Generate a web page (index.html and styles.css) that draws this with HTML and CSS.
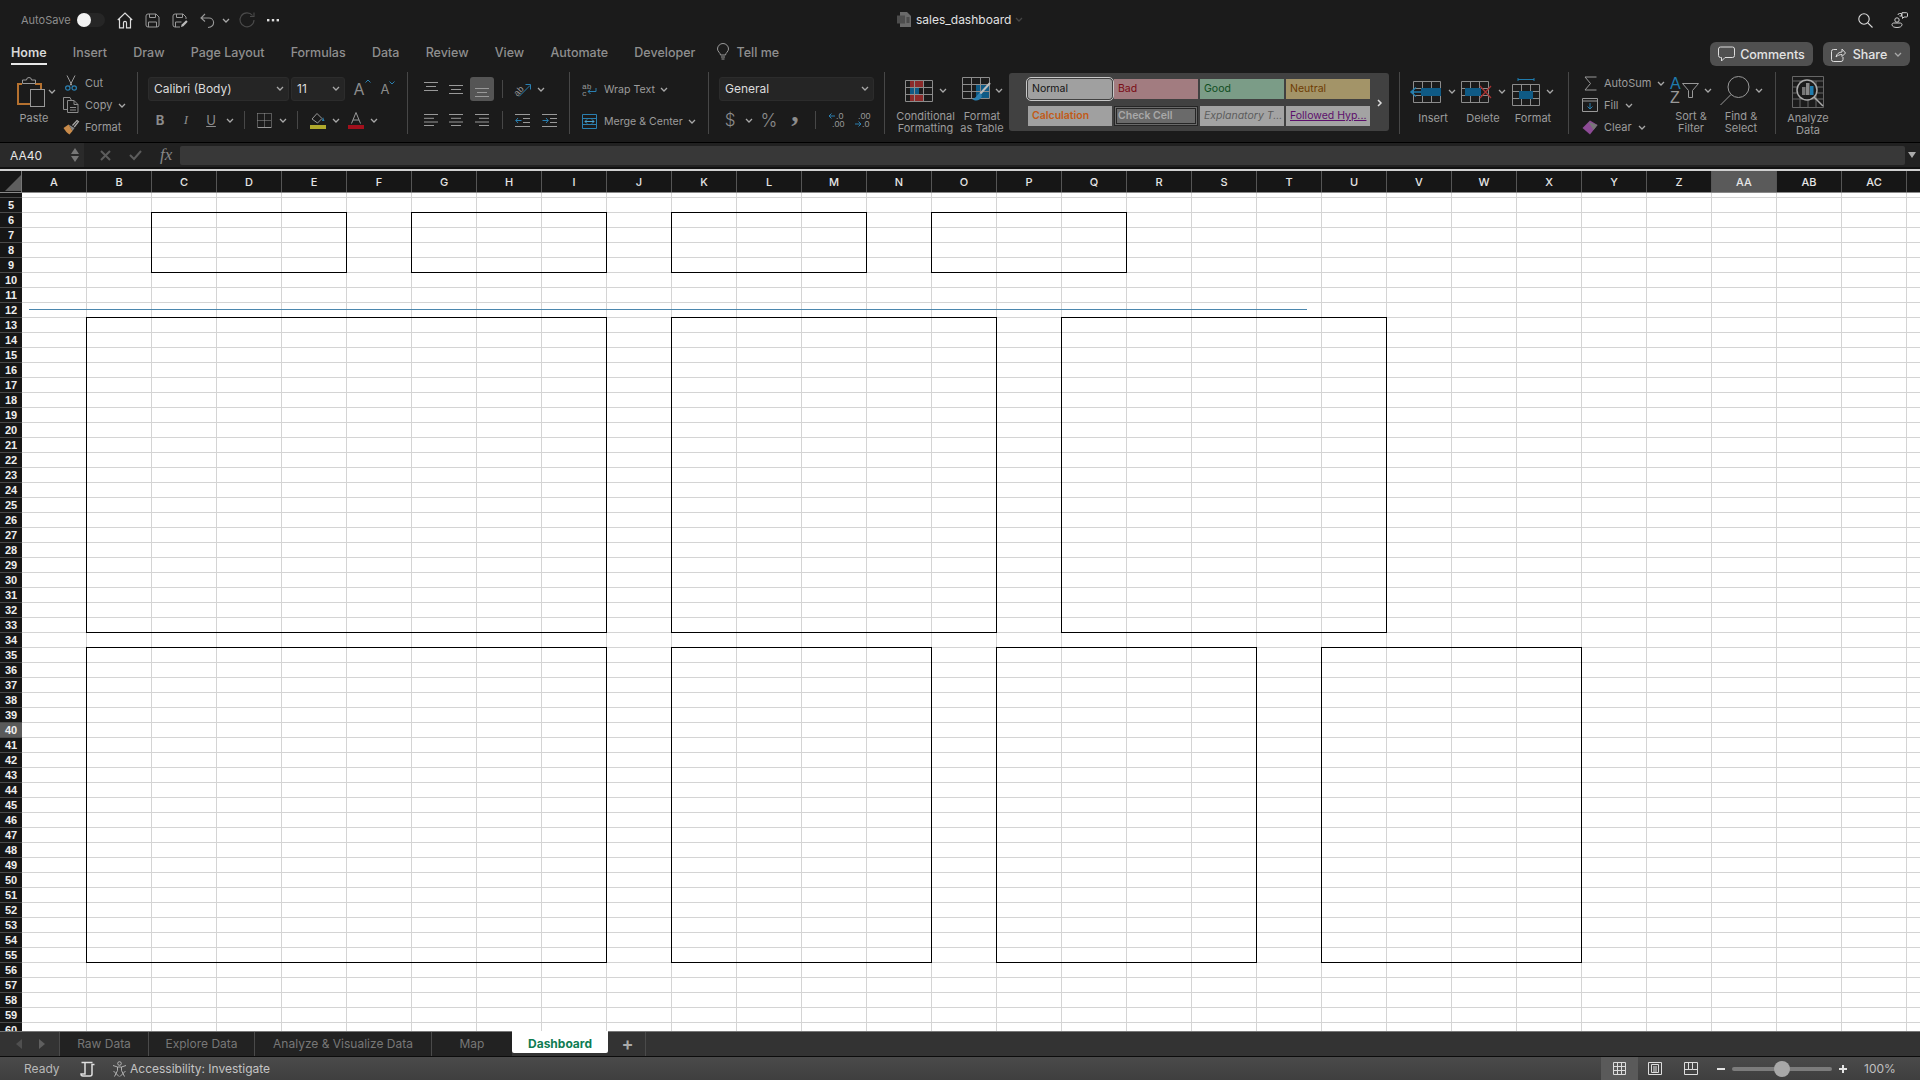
FILE: index.html
```html
<!DOCTYPE html>
<html lang="en">
<head>
    <meta charset="UTF-8">
    <title>sales_dashboard</title>
    <link rel="stylesheet" href="styles.css">
</head>
<body>
    <svg class="sprite" width="0" height="0">
        <symbol id="chev" viewBox="0 0 8 5"><path d="M1 1l3 3 3-3" fill="none" stroke="currentColor" stroke-width="1.3"/></symbol>
        <symbol id="cells3" viewBox="0 0 28 22"><path d="M.5 .5h27v21H.5zM.5 7.5h27M.5 14.5h27M9.5 .5v21M18.5 .5v21" fill="none" stroke="#8c8c8c"/></symbol>
    </svg>

    <!-- title bar -->
    <div class="titlebar">
        <div class="qat">
            <span class="autosave">AutoSave</span>
            <span class="toggle"><span class="knob"></span></span>
            <svg class="q-home" width="16" height="17" viewBox="0 0 16 17" fill="none" stroke="#ddd" stroke-width="1.2"><path d="M.8 8 8 1l7.2 7M2.5 6.8v9h4v-5a1.5 1.5 0 0 1 3 0v5h4v-9"/></svg>
            <svg class="q-save" width="15" height="15" viewBox="0 0 15 15" fill="none" stroke="#999"><path d="M1 3a2 2 0 0 1 2-2h8l3 3v8a2 2 0 0 1-2 2H3a2 2 0 0 1-2-2zM4.5 1v3.5h6V1M3.5 14V9h8v5"/></svg>
            <svg class="q-saveas" width="16" height="15" viewBox="0 0 16 15" fill="none" stroke="#999"><path d="M8 14H3a2 2 0 0 1-2-2V3a2 2 0 0 1 2-2h8l3 3v2M4.5 1v3.5h6V1M3.5 14V9h6"/><path d="M9 14l.7-2.6 4.5-4.2 1.5 1.6-4.3 4.4z" fill="#bbb" stroke="none"/></svg>
            <svg class="q-undo" width="15" height="15" viewBox="0 0 15 15" fill="none" stroke="#999" stroke-width="1.1"><path d="M5 1 1 5l4 3.5M1.2 5H9a4.6 4.6 0 0 1 4.6 4.5c0 2.4-2 4.5-5.6 5"/></svg>
            <svg class="chev q-chev" width="8" height="5"><use href="#chev"/></svg>
            <svg class="q-redo" width="16" height="16" viewBox="0 0 16 16" fill="none" stroke="#4a4a4a" stroke-width="1.1"><path d="M13.5 3.5A7 7 0 1 0 15 8M15 .5v4h-4"/></svg>
            <svg class="q-dots" width="12" height="3" viewBox="0 0 12 3" fill="#ddd"><rect width="2.4" height="2.4"/><rect x="4.8" width="2.4" height="2.4"/><rect x="9.6" width="2.4" height="2.4"/></svg>
        </div>
        <div class="doc-title">
            <svg width="15" height="15" viewBox="0 0 15 15"><path d="M3 0h7l4 4v11H3z" fill="#6a6a6a"/><path d="M0 3.5h8v8H0z" fill="#4d4d4d"/><path d="M9.5 6h3M9.5 8h3M9.5 10h3" stroke="#2a2a2a"/></svg>
            <span>sales_dashboard</span>
            <svg class="chev dim" width="8" height="5"><use href="#chev"/></svg>
        </div>
        <div class="title-right">
            <svg width="15" height="15" viewBox="0 0 15 15" fill="none" stroke="#ddd" stroke-width="1.1"><circle cx="6" cy="6" r="5.2"/><path d="M9.8 9.8 14.5 14.5"/></svg>
            <svg width="17" height="16" viewBox="0 0 17 16" fill="none" stroke="#ccc"><circle cx="6" cy="8" r="2.2"/><path d="M1 12.5c0-1 1-1.5 2-1.5h6c1 0 2 .5 2 1.500 0 2-2 3-5 3s-5-1-5-3zM7 3a1.5 1.5 0 0 1 1.5-1.5h2V4H8.5M11 .7h4.500a1 1 0 0 1 1 1V4a1 1 0 0 1-1 1H13l-1.500 1.500V5H11z"/></svg>
        </div>
    </div>

    <!-- ribbon tabs -->
    <div class="tabs">
        <span class="tab active">Home</span>
        <span class="tab">Insert</span>
        <span class="tab">Draw</span>
        <span class="tab">Page Layout</span>
        <span class="tab">Formulas</span>
        <span class="tab">Data</span>
        <span class="tab">Review</span>
        <span class="tab">View</span>
        <span class="tab">Automate</span>
        <span class="tab">Developer</span>
        <span class="tab tell">
            <svg width="12" height="16" viewBox="0 0 12 16" fill="none" stroke="#999"><path d="M3.5 11c0-2-3-3.5-3-6a5.5 5.5 0 0 1 11 0c0 2.5-3 4-3 6zM4 13h4M4.5 15h3"/></svg>
            Tell me
        </span>
        <div class="tab-actions">
            <button class="pill pill-comments">
                <svg width="17" height="16" viewBox="0 0 17 16" fill="none" stroke="#ddd"><path d="M2.5 1h12a2 2 0 0 1 2 2v6.5a2 2 0 0 1-2 2H7l-3.500 3.500v-3.500h-1a2 2 0 0 1-2-2V3a2 2 0 0 1 2-2z"/></svg>
                Comments
            </button>
            <button class="pill pill-share">
                <svg width="15" height="15" viewBox="0 0 15 15" fill="none" stroke="#ddd"><path d="M6 2.5H2.5a2 2 0 0 0-2 2v8a2 2 0 0 0 2 2H10a2 2 0 0 0 2-2V10M5 10c.5-3 3-5 6-5V2l3.500 4L11 9.500V7.500c-2.500 0-4.500 1-6 2.500z"/></svg>
                Share
                <svg class="chev" width="8" height="5"><use href="#chev"/></svg>
            </button>
        </div>
    </div>

    <!-- ribbon -->
    <div class="ribbon">
        <div class="group g-clip">
            <div class="big paste">
                <div class="big-ic">
                    <svg width="28" height="30" viewBox="0 0 28 30" fill="none"><path d="M5 7H1v20h12M18 7h6v5" stroke="#b5712f" stroke-width="2"/><path d="M5.5 6.5V3h4a2.500 2.500 0 0 1 5 0h4v3.500z" stroke="#999"/><rect x="13.5" y="12.5" width="14" height="17" fill="#1b1b1b" stroke="#999"/></svg>
                    <svg class="chev" width="8" height="5"><use href="#chev"/></svg>
                </div>
                <span class="big-label">Paste</span>
            </div>
            <div class="mini-list">
                <div class="mini"><span class="mini-ic"><svg width="12" height="16" viewBox="0 0 12 16" fill="none"><path d="M2 .5l5 10M10 .5l-5 10" stroke="#999"/><circle cx="2.8" cy="13" r="2.2" stroke="#2a7fb0" stroke-width="1.2"/><circle cx="9.2" cy="13" r="2.2" stroke="#2a7fb0" stroke-width="1.2"/></svg></span><span>Cut</span></div>
                <div class="mini"><span class="mini-ic"><svg width="16" height="16" viewBox="0 0 16 16" fill="none" stroke="#8c8c8c"><path d="M4.5 12.5H.5V.5H7l1.500 3M4.500 3.500H11l4 4v8H4.500zM11 3.500v4h4M7 10.500h6M7 13h6"/></svg></span><span>Copy</span><svg class="chev" width="8" height="5"><use href="#chev"/></svg></div>
                <div class="mini"><span class="mini-ic"><svg width="16" height="15" viewBox="0 0 16 15" fill="none"><path d="M9.5 5.5l4.500-5 1.500 1.200-4.300 5.300" stroke="#aaa" stroke-width="1.2"/><path d="M5.5 4.5l6 3.500-2 3z" fill="#888"/><path d="M.5 8l5-3.500 4 6.500-3 3.500C4 13 2 10.500 .5 8z" fill="#c98b4a"/></svg></span><span>Format</span></div>
            </div>
        </div>

        <div class="group g-font">
            <div class="row">
                <div class="select font-name"><span>Calibri (Body)</span><svg class="chev" width="8" height="5"><use href="#chev"/></svg></div>
                <div class="select font-size"><span>11</span><svg class="chev" width="8" height="5"><use href="#chev"/></svg></div>
                <span class="grow">A<svg width="6" height="4" viewBox="0 0 6 4" fill="none" stroke="#2a7fb0"><path d="M.5 3.500 3 1l2.500 2.500"/></svg></span>
                <span class="shrink">A<svg width="6" height="4" viewBox="0 0 6 4" fill="none" stroke="#2a7fb0"><path d="M.5 .5 3 3 5.500 .5"/></svg></span>
            </div>
            <div class="row-grid font-row2">
                <b class="fmt">B</b>
                <i class="fmt fmt-i">I</i>
                <u class="fmt">U</u>
                <svg class="chev" width="8" height="5"><use href="#chev"/></svg>
                <span class="vsep"></span>
                <svg width="15" height="15" viewBox="0 0 15 15" fill="none" stroke="#999"><path d="M.5 14.500h14"/><path d="M.5 .5h14M.5 .5v14M14.500 .5v14M7.500 .5v14M.5 7.500h14" stroke-dasharray="1 1"/></svg>
                <svg class="chev" width="8" height="5"><use href="#chev"/></svg>
                <span class="vsep"></span>
                <svg width="16" height="17" viewBox="0 0 16 17" fill="none"><path d="M2 7l5-5.500 5 5-4.500 4.500z" stroke="#999"/><path d="M13 5l1.500 4-2.500 0z" fill="#2a7fb0"/><rect y="13" width="16" height="4" fill="#b0a92c"/></svg>
                <svg class="chev" width="8" height="5"><use href="#chev"/></svg>
                <svg width="16" height="17" viewBox="0 0 16 17" fill="none"><path d="M3.500 11.500 8 .5l4.500 11M5 8h6" stroke="#999"/><rect y="13" width="16" height="4" fill="#a3101c"/></svg>
                <svg class="chev" width="8" height="5"><use href="#chev"/></svg>
            </div>
        </div>

        <div class="group g-align">
            <div class="row-grid align-row1">
                <svg class="a-top" width="14" height="9" viewBox="0 0 14 9" stroke="#999"><path d="M0 .5h14M2 4.500h10M0 8.500h14"/></svg>
                <svg width="14" height="9" viewBox="0 0 14 9" stroke="#999"><path d="M0 .5h14M2 4.500h10M0 8.500h14"/></svg>
                <span class="on"><svg class="a-bot" width="14" height="9" viewBox="0 0 14 9" stroke="#999"><path d="M0 .5h14M2 4.500h10M0 8.500h14"/></svg></span>
                <span class="vsep"></span>
                <svg width="17" height="15" viewBox="0 0 17 15" fill="none"><text transform="rotate(-45 6 9)" x="0" y="11" class="ic-ab">ab</text><path d="M5 14.500 16 3.500M11.500 2.500h5v5" stroke="#2a7fb0"/></svg>
                <svg class="chev" width="8" height="5"><use href="#chev"/></svg>
            </div>
            <div class="row-grid align-row2">
                <svg width="14" height="12" viewBox="0 0 14 12" stroke="#999"><path d="M0 .5h14M0 4.300h10M0 8h14M0 11.500h10"/></svg>
                <svg width="14" height="12" viewBox="0 0 14 12" stroke="#999"><path d="M0 .5h14M2 4.300h10M0 8h14M2 11.500h10"/></svg>
                <svg width="14" height="12" viewBox="0 0 14 12" stroke="#999"><path d="M0 .5h14M4 4.300h10M0 8h14M4 11.500h10"/></svg>
                <span class="vsep"></span>
                <svg width="15" height="13" viewBox="0 0 15 13" fill="none"><path d="M0 .5h15M0 12.500h15M8 4.500h7M8 8.500h7" stroke="#999"/><path d="M6.500 6.500H.8M3 4 .8 6.500 3 9" stroke="#2a7fb0"/></svg>
                <svg width="15" height="13" viewBox="0 0 15 13" fill="none"><path d="M0 .5h15M0 12.500h15M8 4.500h7M8 8.500h7" stroke="#999"/><path d="M.5 6.500h5.700M4 4l2.200 2.500L4 9" stroke="#2a7fb0"/></svg>
            </div>
        </div>

        <div class="group g-wrap">
            <div class="mini mini-tall">
                <span class="wrap-ic"><svg width="15" height="15" viewBox="0 0 15 15" fill="none"><text x="0" y="6.500" class="ic-txt">ab</text><text x="0" y="14" class="ic-txt">c</text><path d="M14 6v3.500H6M8.500 7.500 6 9.500 8.500 12" stroke="#2a7fb0"/></svg></span>
                <span>Wrap Text</span><svg class="chev" width="8" height="5"><use href="#chev"/></svg>
            </div>
            <div class="mini mini-tall">
                <span class="wrap-ic"><svg width="15" height="15" viewBox="0 0 15 15" fill="none" stroke="#2a7fb0"><path d="M.5 .5h14v14H.5zM.5 4.500h14M.5 10.500h14"/><path d="M3 7.500h9M5 5.500l-2 2 2 2M10 5.500l2 2-2 2" stroke="#4aa3d0"/></svg></span>
                <span>Merge &amp; Center</span><svg class="chev" width="8" height="5"><use href="#chev"/></svg>
            </div>
        </div>

        <div class="group g-num">
            <div class="row"><div class="select num-format"><span>General</span><svg class="chev" width="8" height="5"><use href="#chev"/></svg></div></div>
            <div class="row-grid num-row2">
                <span class="sym">$</span>
                <svg class="chev" width="8" height="5"><use href="#chev"/></svg>
                <span class="sym sym-pct">%</span>
                <span class="sym sym-comma">,</span>
                <span class="vsep"></span>
                <svg width="16" height="16" viewBox="0 0 16 16" fill="none"><path d="M7 4H1M3.500 1.500 1 4l2.500 2.500" stroke="#2a7fb0"/><text x="8" y="7" class="ic-num">.0</text><text x="4" y="15" class="ic-num">.00</text></svg>
                <svg width="16" height="16" viewBox="0 0 16 16" fill="none"><text x="4" y="7" class="ic-num">.00</text><path d="M1 12h6M4.500 9.500 7 12l-2.500 2.500" stroke="#2a7fb0"/><text x="8" y="15" class="ic-num">.0</text></svg>
            </div>
        </div>

        <div class="group g-styles">
            <div class="big b-cond">
                <div class="big-ic">
                    <svg width="28" height="22" viewBox="0 0 28 22"><rect x="5" y="1" width="13" height="6" fill="#8c2a2a"/><rect x="5" y="8" width="9" height="6" fill="#0f5a85"/><rect x="5" y="15" width="14" height="6" fill="#8c2a2a"/><use href="#cells3" width="28" height="22"/></svg>
                    <svg class="chev" width="8" height="5"><use href="#chev"/></svg>
                </div>
                <span class="big-label">Conditional<br>Formatting</span>
            </div>
            <div class="big b-table">
                <div class="big-ic">
                    <svg width="30" height="27" viewBox="0 0 30 27"><rect x="14" y="8" width="13" height="13" fill="#0f5a85"/><use href="#cells3" width="28" height="22"/><path d="M28 6 18 17" stroke="#bbb" stroke-width="2"/><path d="M18 16c-3 1-3 5-8 6 2 2 8 3 10-3z" fill="#2a7fb0"/></svg>
                    <svg class="chev" width="8" height="5"><use href="#chev"/></svg>
                </div>
                <span class="big-label">Format<br>as Table</span>
            </div>
            <div class="gallery">
                <span class="st st-normal">Normal</span>
                <span class="st st-bad">Bad</span>
                <span class="st st-good">Good</span>
                <span class="st st-neutral">Neutral</span>
                <span class="st st-calc">Calculation</span>
                <span class="st st-check">Check Cell</span>
                <span class="st st-expl">Explanatory T...</span>
                <span class="st st-link">Followed Hyp...</span>
                <svg class="gallery-next" width="6" height="8" viewBox="0 0 6 8" fill="none" stroke="#ddd" stroke-width="1.5"><path d="M1 1l3 3-3 3"/></svg>
            </div>
        </div>

        <div class="group g-cells">
            <div class="big b-cell">
                <div class="big-ic">
                    <svg width="32" height="22" viewBox="0 0 32 22"><g transform="translate(3)"><use href="#cells3" width="28" height="22"/><rect x="8" y="7" width="20" height="8" fill="#0f5a85"/></g><path d="M11 11H1M6 6.500 1 11l5 4.500" fill="none" stroke="#1f7cae" stroke-width="1.5"/></svg>
                    <svg class="chev" width="8" height="5"><use href="#chev"/></svg>
                </div>
                <span class="big-label">Insert</span>
            </div>
            <div class="big b-cell">
                <div class="big-ic">
                    <svg width="31" height="22" viewBox="0 0 31 22"><use href="#cells3" width="28" height="22"/><rect x="4" y="7" width="16" height="8" fill="#0f5a85"/><path d="M19 5 30 17M30 5 19 17" stroke="#a83232" stroke-width="1.3"/></svg>
                    <svg class="chev" width="8" height="5"><use href="#chev"/></svg>
                </div>
                <span class="big-label">Delete</span>
            </div>
            <div class="big b-cell">
                <div class="big-ic">
                    <svg width="28" height="28" viewBox="0 0 28 28"><path d="M6 1.500h16M6 0v3M22 0v3" stroke="#1f7cae"/><g transform="translate(0 6)"><use href="#cells3" width="28" height="22"/><rect x="7" y="7" width="14" height="8" fill="#0f5a85"/></g></svg>
                    <svg class="chev" width="8" height="5"><use href="#chev"/></svg>
                </div>
                <span class="big-label">Format</span>
            </div>
        </div>

        <div class="group g-edit">
            <div class="mini-list edit-list">
                <div class="mini"><span class="mini-ic"><svg width="13" height="15" viewBox="0 0 13 15" fill="none" stroke="#999"><path d="M12.500 1H1l5.500 6.500L1 14h11.500"/></svg></span><span>AutoSum</span><svg class="chev" width="8" height="5"><use href="#chev"/></svg></div>
                <div class="mini"><span class="mini-ic"><svg width="16" height="14" viewBox="0 0 16 14" fill="none"><path d="M.5 .5h15v13H.5zM.5 3h15" stroke="#999"/><path d="M8 5v6M5.500 8.500 8 11l2.500-2.500" stroke="#2a7fb0"/></svg></span><span>Fill</span><svg class="chev" width="8" height="5"><use href="#chev"/></svg></div>
                <div class="mini"><span class="mini-ic"><svg width="16" height="16" viewBox="0 0 16 16"><path d="M.5 9 8 1.500 15.500 6 8 15.500z" fill="#8d4b96"/><path d="M6.500 3 15.500 6l-4 5z" fill="#777"/></svg></span><span>Clear</span><svg class="chev" width="8" height="5"><use href="#chev"/></svg></div>
            </div>
            <div class="big b-sort">
                <div class="big-ic">
                    <svg width="29" height="28" viewBox="0 0 29 28" fill="none"><text x="0" y="12" class="ic-az">A</text><text x="0" y="26" class="ic-az ic-z">Z</text><path d="M12.500 6.500h16l-6 7v7h-4v-7z" stroke="#999"/></svg>
                    <svg class="chev" width="8" height="5"><use href="#chev"/></svg>
                </div>
                <span class="big-label">Sort &amp;<br>Filter</span>
            </div>
            <div class="big b-sort">
                <div class="big-ic">
                    <svg width="30" height="30" viewBox="0 0 30 30" fill="none" stroke="#999"><circle cx="18.500" cy="11" r="10.500"/><path d="M11 18.500 .5 29"/></svg>
                    <svg class="chev" width="8" height="5"><use href="#chev"/></svg>
                </div>
                <span class="big-label">Find &amp;<br>Select</span>
            </div>
        </div>

        <div class="group g-analyze">
            <div class="big b-analyze">
                <div class="big-ic">
                    <svg width="32" height="32" viewBox="0 0 32 32" fill="none"><path d="M.5 .5h31v31H.5zM.5 5h31M.5 11h31M.5 17h31M.5 23h31M8 5v26M16 5v26M24 5v26" stroke="#666"/><circle cx="15" cy="14" r="10" fill="#1b1b1b" stroke="#aaa" stroke-width="1.5"/><rect x="10" y="11" width="3.500" height="8" fill="#777"/><rect x="14" y="7" width="3.500" height="12" fill="#888"/><rect x="18" y="10" width="3.500" height="9" fill="#1f7cae"/><path d="M22 21 31 30" stroke="#aaa" stroke-width="1.5"/></svg>
                </div>
                <span class="big-label">Analyze<br>Data</span>
            </div>
        </div>
    </div>

    <!-- formula bar -->
    <div class="formula-bar">
        <div class="name-box">
            <span>AA40</span>
            <span class="spin"><span class="tri-up"></span><span class="tri-down"></span></span>
        </div>
        <div class="fx-btns">
            <svg width="11" height="11" viewBox="0 0 11 11" stroke="#5c5c5c" stroke-width="2"><path d="M1 1l9 9M10 1l-9 9"/></svg>
            <svg width="13" height="11" viewBox="0 0 13 11" fill="none" stroke="#5c5c5c" stroke-width="2"><path d="M1 5l4 4 7-8"/></svg>
            <span class="fx">fx</span>
        </div>
        <div class="formula-input"></div>
        <span class="tri-down formula-drop"></span>
    </div>

    <!-- sheet -->
    <div class="col-heads">
        <span class="corner"><svg width="16" height="16" viewBox="0 0 16 16"><path d="M16 0v16H0z" fill="#5e5e5e"/></svg></span>
        <span class="ch">A</span><span class="ch">B</span><span class="ch">C</span><span class="ch">D</span><span class="ch">E</span>
        <span class="ch">F</span><span class="ch">G</span><span class="ch">H</span><span class="ch">I</span><span class="ch">J</span>
        <span class="ch">K</span><span class="ch">L</span><span class="ch">M</span><span class="ch">N</span><span class="ch">O</span>
        <span class="ch">P</span><span class="ch">Q</span><span class="ch">R</span><span class="ch">S</span><span class="ch">T</span>
        <span class="ch">U</span><span class="ch">V</span><span class="ch">W</span><span class="ch">X</span><span class="ch">Y</span>
        <span class="ch">Z</span><span class="ch ch-sel">AA</span><span class="ch">AB</span><span class="ch">AC</span><span class="ch"></span>
    </div>
    <div class="sheet">
        <div class="row-heads">
            <span class="rh rh-stub"></span>
            <span class="rh">5</span><span class="rh">6</span><span class="rh">7</span><span class="rh">8</span><span class="rh">9</span>
            <span class="rh">10</span><span class="rh">11</span><span class="rh">12</span><span class="rh">13</span><span class="rh">14</span>
            <span class="rh">15</span><span class="rh">16</span><span class="rh">17</span><span class="rh">18</span><span class="rh">19</span>
            <span class="rh">20</span><span class="rh">21</span><span class="rh">22</span><span class="rh">23</span><span class="rh">24</span>
            <span class="rh">25</span><span class="rh">26</span><span class="rh">27</span><span class="rh">28</span><span class="rh">29</span>
            <span class="rh">30</span><span class="rh">31</span><span class="rh">32</span><span class="rh">33</span><span class="rh">34</span>
            <span class="rh">35</span><span class="rh">36</span><span class="rh">37</span><span class="rh">38</span><span class="rh">39</span>
            <span class="rh rh-sel">40</span><span class="rh">41</span><span class="rh">42</span><span class="rh">43</span><span class="rh">44</span>
            <span class="rh">45</span><span class="rh">46</span><span class="rh">47</span><span class="rh">48</span><span class="rh">49</span>
            <span class="rh">50</span><span class="rh">51</span><span class="rh">52</span><span class="rh">53</span><span class="rh">54</span>
            <span class="rh">55</span><span class="rh">56</span><span class="rh">57</span><span class="rh">58</span><span class="rh">59</span>
            <span class="rh">60</span>
        </div>
        <div class="cells">
            <div class="shapes">
                <div class="box kpi k1"></div>
                <div class="box kpi k2"></div>
                <div class="box kpi k3"></div>
                <div class="box kpi k4"></div>
                <div class="box mid m1"></div>
                <div class="box mid m2"></div>
                <div class="box mid m3"></div>
                <div class="box low l1"></div>
                <div class="box low l2"></div>
                <div class="box low l3"></div>
                <div class="box low l4"></div>
            </div>
            <div class="rule"></div>
        </div>
    </div>

    <!-- sheet tabs -->
    <div class="sheet-tabs">
        <div class="tab-nav">
            <span class="tri-left"></span>
            <span class="tri-right"></span>
        </div>
        <span class="stab stab-raw">Raw Data</span>
        <span class="stab stab-explore">Explore Data</span>
        <span class="stab stab-analyze">Analyze &amp; Visualize Data</span>
        <span class="stab stab-map">Map</span>
        <span class="stab stab-on">Dashboard</span>
        <span class="stab-add">+</span>
    </div>

    <!-- status bar -->
    <div class="status">
        <span class="ready">Ready</span>
        <svg class="macro" width="15" height="16" viewBox="0 0 15 16" fill="none" stroke="#e0e0e0"><path d="M1.500 1.500h11M5 1.500V13H1c0 1 .7 2 2 2h7c1 0 2-1 2-2V3.500h2.500" stroke-width="1.5"/></svg>
        <svg class="a11y" width="15" height="16" viewBox="0 0 15 16" fill="none" stroke="#bbb" stroke-width=".9"><circle cx="7.500" cy="2.500" r="1.800"/><path d="M1 4.500 5.500 6h4L14 4.500M5.500 6v3.500L2.500 15.500M9.500 6v3.500l3 6M1.500 10l5.500 5.500M13.500 10 8 15.500"/></svg>
        <span class="a11y-text">Accessibility: Investigate</span>
        <div class="status-right">
            <span class="view view-on"><svg width="13" height="13" viewBox="0 0 13 13" fill="none" stroke="#ddd"><path d="M.5 .5h12v12H.5zM.5 4.500h12M.5 8.500h12M4.500 .5v12M8.500 .5v12"/></svg></span>
            <span class="view view-page"><svg width="14" height="13" viewBox="0 0 14 13" fill="none" stroke="#ddd"><path d="M.5 .5h13v12H.5zM3.500 2.500h7v8h-7zM5 5h4M5 7h4M5 9h4"/></svg></span>
            <span class="view view-break"><svg width="14" height="13" viewBox="0 0 14 13" fill="none" stroke="#ddd"><path d="M.5 .5h13v12H.5zM.5 7.500h8V.5M8.500 7.500h5M4.500 .5v7"/></svg></span>
            <span class="zoom-btn"></span>
            <div class="slider"><span class="slider-knob"></span></div>
            <span class="zoom-btn zoom-plus"></span>
            <span class="zoom-val">100%</span>
        </div>
    </div>
</body>
</html>
```

FILE: styles.css
```css
* {
    box-sizing: border-box;
}
html, body {
    margin: 0;
    height: 100%;
}
body {
    width: 1920px;
    height: 1080px;
    overflow: hidden;
    display: flex;
    flex-direction: column;
    background-color: #1b1b1b;
    color: #9c9c9c;
    font-family: Inter, "Liberation Sans", sans-serif;
    font-size: 11px;
}
.sprite {
    position: absolute;
}
svg {
    display: block;
    flex: none;
    overflow: visible;
}
.chev {
    color: #a8a8a8;
}
.chev.dim {
    color: #444;
}

/* title bar */
.titlebar {
    height: 40px;
    display: flex;
    align-items: center;
    position: relative;
    flex: none;
}
.qat {
    display: flex;
    align-items: center;
    padding-left: 21px;
}
.autosave {
    width: 56px;
    color: #8e8e8e;
}
.toggle {
    width: 28px;
    height: 14px;
    border-radius: 7px;
    background-color: #262626;
}
.knob {
    display: block;
    width: 14px;
    height: 14px;
    border-radius: 50%;
    background-color: #f2f2f2;
}
.q-home { margin-left: 12px; }
.q-save { margin-left: 12px; }
.q-saveas { margin-left: 12px; }
.q-undo { margin-left: 12px; }
.q-chev { margin-left: 7px; }
.q-redo { margin-left: 9px; }
.q-dots { margin-left: 12px; }
.doc-title {
    position: absolute;
    left: 897px;
    top: 12px;
    display: flex;
    align-items: center;
    gap: 4px;
    font-size: 12px;
    color: #e2e2e2;
}
.title-right {
    margin-left: auto;
    padding-right: 12px;
    display: flex;
    align-items: center;
    gap: 18px;
}

/* tabs */
.tabs {
    height: 30px;
    flex: none;
    display: flex;
    align-items: flex-start;
    gap: 26.2px;
    padding-left: 11px;
    font-size: 12.5px;
    font-weight: 500;
    color: #8f8f8f;
}
.tab {
    height: 25px;
    padding-top: 4px;
    line-height: 17px;
}
.tab.active {
    color: #d8d8d8;
    font-weight: 600;
    border-bottom: 2px solid #e8e8e8;
}
.tell {
    display: flex;
    gap: 8px;
    margin-left: -5px;
}
.tab-actions {
    margin-left: auto;
    padding: 2px 10px 0 0;
    display: flex;
    gap: 10px;
}
.pill {
    height: 24px;
    padding: 0;
    border: none;
    border-radius: 6px;
    background-color: #505050;
    color: #e4e4e4;
    font: 500 12.5px Inter, "Liberation Sans", sans-serif;
    display: flex;
    align-items: center;
    justify-content: center;
    gap: 5px;
}
.pill-comments { width: 103px; }
.pill-share { width: 87px; gap: 7px; }

/* ribbon */
.ribbon {
    height: 72px;
    flex: none;
    display: flex;
    align-items: flex-start;
}
.group {
    height: 62px;
    margin-top: 2px;
    border-right: 1px solid #474747;
    flex: none;
}
.g-clip { width: 138px; display: flex; }
.g-font { width: 270px; padding: 5px 0 0 10px; }
.g-align { width: 162px; padding: 5px 0 0 10px; }
.g-wrap { width: 139px; padding: 5px 0 0 10px; }
.g-num { width: 176px; padding: 5px 0 0 10px; }
.g-styles { width: 515px; padding-left: 11px; display: flex; }
.g-cells { width: 169px; padding-left: 8px; display: flex; }
.g-edit { width: 207px; padding-left: 13px; display: flex; }
.g-analyze { border-right: none; padding-left: 6px; }

.row {
    height: 24px;
    display: flex;
    align-items: center;
    gap: 2px;
}
.row-grid {
    height: 24px;
    margin-top: 7px;
    display: grid;
    align-items: center;
    justify-items: center;
}
.font-row2 { grid-template-columns: 24px 28px 22px 16px 12px 28px 10px 18px 24px 12px 28px 8px; }
.align-row1 { grid-template-columns: 25px 26px 26px 14px 26px 12px; margin-top: 0; }
.align-row2 { grid-template-columns: 25px 26px 26px 14px 27px 26px; }
.num-row2 { grid-template-columns: 22px 16px 24px 28px 12px 30px 22px; }
.a-top { margin-bottom: 6px; }
.a-bot { margin-top: 6px; }

.select {
    height: 24px;
    display: flex;
    align-items: center;
    justify-content: space-between;
    padding: 0 4px 1px 5px;
    background-color: #252525;
    border: 1px solid #2c2c2c;
    border-radius: 3px;
    color: #dcdcdc;
    font-size: 12px;
}
.font-name { width: 141px; }
.font-size { width: 54px; }
.num-format { width: 155px; }
.grow, .shrink {
    display: flex;
    justify-content: center;
    align-items: flex-start;
    font-size: 16px;
    color: #8c8c8c;
}
.grow { width: 30px; }
.shrink { width: 24px; margin-left: -3px; font-size: 13px; }
.vsep {
    width: 1px;
    height: 18px;
    background-color: #474747;
}
.fmt {
    font-size: 13px;
    color: #8c8c8c;
    font-weight: 700;
}
.fmt-i {
    font-family: "Liberation Serif", serif;
    font-weight: 400;
}
u.fmt {
    font-weight: 400;
}
.on {
    width: 24px;
    height: 24px;
    border-radius: 3px;
    background-color: #555;
    display: flex;
    align-items: center;
    justify-content: center;
}
.sym {
    font-size: 17px;
    font-weight: 300;
    color: #8c8c8c;
}
.sym-pct {
    font-size: 18px;
}
.sym-comma {
    font: 700 30px/24px "Liberation Serif", serif;
    transform: translateY(-9px);
}
.ic-txt {
    font: 8px "Liberation Mono", monospace;
    fill: #999;
}
.ic-ab {
    font: 9px "Liberation Sans", sans-serif;
    fill: #999;
}
.ic-num {
    font: 9px "Liberation Sans", sans-serif;
    fill: #999;
}
.ic-az {
    font: 16px "Liberation Sans", sans-serif;
    fill: #1f7cae;
}
.ic-z {
    fill: #999;
}

/* big ribbon buttons */
.big {
    display: flex;
    flex-direction: column;
    align-items: center;
    text-align: center;
    line-height: 12px;
    flex: none;
}
.big-ic {
    height: 40px;
    padding-bottom: 1px;
    display: flex;
    align-items: center;
    justify-content: center;
    gap: 6px;
}
.big-label {
    color: #9c9c9c;
}
.paste {
    width: 63px;
    align-items: flex-start;
}
.paste .big-ic {
    padding-left: 17px;
    gap: 3px;
}
.paste .big-label {
    width: 100%;
    padding-left: 5px;
}
.b-cond { width: 59px; }
.b-table { width: 54px; }
.b-table .big-ic { gap: 3px; }
.b-cell { width: 50px; }
.b-sort { width: 50px; }
.b-analyze { width: 52px; }
.b-sort .big-ic { gap: 5px; }

.mini-list {
    flex: none;
}
.mini {
    height: 22px;
    display: flex;
    align-items: center;
    gap: 6px;
}
.mini-ic {
    width: 16px;
    display: flex;
    justify-content: center;
}
.edit-list {
    width: 84px;
}
.mini-tall {
    height: 24px;
    margin-bottom: 8px;
    font-size: 10.6px;
    gap: 5px;
}
.wrap-ic {
    width: 15px;
    margin-right: 2px;
    margin-left: 2px;
}

/* style gallery */
.gallery {
    position: relative;
    width: 380px;
    height: 58px;
    margin-top: 1px;
    padding: 6px 0 0 19px;
    background-color: #414141;
    border-radius: 3px;
    display: grid;
    grid-template-columns: repeat(4, 84px);
    grid-template-rows: 20px 20px;
    gap: 7px 2px;
    font-size: 10.5px;
}
.gallery-next {
    position: absolute;
    left: 368px;
    top: 26px;
}
.st {
    padding-left: 4px;
    line-height: 20px;
    white-space: nowrap;
}
.st-normal { background-color: #a0a0a0; color: #141414; outline: 1px solid #c8c8c8; outline-offset: 1px; border-radius: 3px; }
.st-bad { background-color: #a27c80; color: #7a0b14; }
.st-good { background-color: #7b9c87; color: #0f4d1e; }
.st-neutral { background-color: #a39468; color: #6e3c04; }
.st-calc { background-color: #a0a0a0; color: #c25a17; font-weight: 600; }
.st-check { background-color: #6a6a6a; color: #a8a8a8; font-weight: 600; border: 3px double #262626; line-height: 14px; padding-left: 1px; }
.st-expl { background-color: #a3a3a3; color: #5c5c5c; font-style: italic; }
.st-link { background-color: #a3a3a3; color: #5c0f6b; text-decoration: underline; }

/* formula bar */
.formula-bar {
    height: 27px;
    flex: none;
    display: flex;
    align-items: center;
    background-color: #212121;
    border-top: 1px solid #000;
    border-bottom: 2px solid #111;
}
.name-box {
    width: 84px;
    height: 100%;
    padding: 0 5px 0 10px;
    display: flex;
    align-items: center;
    justify-content: space-between;
    background-color: #2a2a2a;
    color: #e6e6e6;
    font-size: 12px;
}
.spin {
    display: flex;
    flex-direction: column;
    gap: 2px;
}
.tri-up, .tri-down {
    display: block;
    width: 0;
    height: 0;
    border-left: 4px solid transparent;
    border-right: 4px solid transparent;
}
.tri-up { border-bottom: 6px solid #777; }
.tri-down { border-top: 6px solid #777; }
.fx-btns {
    width: 96px;
    padding-left: 16px;
    display: flex;
    align-items: center;
    gap: 18px;
}
.fx {
    font: italic 17px "Liberation Serif", serif;
    color: #888;
}
.formula-input {
    width: 1725px;
    height: 19px;
    background-color: #383838;
    border-radius: 2px;
}
.formula-drop {
    margin-left: 3px;
    border-top-color: #aaa;
}

/* column headers */
.col-heads {
    height: 24px;
    flex: none;
    display: flex;
    background-color: #161616;
    border-top: 2px solid #cfcfcf;
    border-bottom: 1px solid #8a8a8a;
    overflow: hidden;
}
.corner {
    width: 22px;
    flex: none;
    padding: 4px 0 0 5px;
    border-right: 1px solid #777;
}
.ch {
    width: 65px;
    flex: none;
    text-align: center;
    line-height: 22px;
    color: #e6e6e6;
    font-weight: 500;
    border-right: 1px solid #555;
}
.ch-sel {
    background-color: #5a5a5a;
}

/* grid */
.sheet {
    flex: 1;
    min-height: 0;
    display: flex;
    overflow: hidden;
    background-color: #fff;
}
.row-heads {
    width: 22px;
    flex: none;
    background-color: #161616;
    overflow: hidden;
}
.rh {
    display: block;
    height: 15px;
    text-align: center;
    color: #eee;
    font: 700 11px/14px "Liberation Sans", sans-serif;
    border-bottom: 1px solid #4a4a4a;
}
.rh-stub { height: 5px; }
.rh-sel { background-color: #5a5a5a; }
.cells {
    flex: 1;
    position: relative;
    background-image:
        linear-gradient(to left, #d4d4d4 1px, transparent 1px),
        linear-gradient(to top, #d4d4d4 1px, transparent 1px);
    background-size: 65px 15px;
    background-position: 0 5px;
}
.shapes {
    position: absolute;
    left: -1px;
    top: 4px;
    display: grid;
    grid-template-columns: repeat(29, 65px);
    grid-template-rows: repeat(56, 15px);
}
.box {
    border: 1px solid #000;
    margin: 0 -1px -1px 0;
}
.kpi { grid-row: 2 / 6; }
.mid { grid-row: 9 / 30; }
.low { grid-row: 31 / 52; }
.k1 { grid-column: 3 / 6; }
.k2 { grid-column: 7 / 10; }
.k3 { grid-column: 11 / 14; }
.k4 { grid-column: 15 / 18; }
.m1 { grid-column: 2 / 10; }
.m2 { grid-column: 11 / 16; }
.m3 { grid-column: 17 / 22; }
.l1 { grid-column: 2 / 10; }
.l2 { grid-column: 11 / 15; }
.l3 { grid-column: 16 / 20; }
.l4 { grid-column: 21 / 25; }
.rule {
    position: absolute;
    left: 7px;
    top: 116px;
    width: 1278px;
    height: 1px;
    background-color: #4b87ae;
}

/* sheet tabs */
.sheet-tabs {
    height: 26px;
    flex: none;
    display: flex;
    background-color: #333;
    border-top: 1px solid #777;
    border-bottom: 1px solid #0c0c0c;
    font-size: 12px;
    color: #777;
}
.tab-nav {
    width: 60px;
    padding-left: 16px;
    display: flex;
    align-items: center;
    gap: 17px;
    border-right: 1px solid #4a4a4a;
}
.tri-left, .tri-right {
    width: 0;
    height: 0;
    border-top: 5px solid transparent;
    border-bottom: 5px solid transparent;
}
.tri-left { border-right: 6px solid #4f4f4f; }
.tri-right { border-left: 6px solid #5f5f5f; }
.stab {
    line-height: 24px;
    text-align: center;
    background-color: #222;
    border-right: 1px solid #4a4a4a;
    white-space: nowrap;
}
.stab-raw { width: 89px; }
.stab-explore { width: 106px; }
.stab-analyze { width: 177px; }
.stab-map { width: 80px; border-right: none; }
.stab-on {
    width: 96px;
    height: 22px;
    margin-top: -1px;
    line-height: 25px;
    background-color: #fff;
    color: #107c52;
    font-weight: 700;
    border: none;
    border-radius: 0 0 2px 2px;
}
.stab-add {
    width: 38px;
    padding-left: 2px;
    text-align: center;
    line-height: 23px;
    font-size: 18px;
    font-weight: 600;
    color: #aaa;
    border-right: 1px solid #4a4a4a;
}

/* status bar */
.status {
    height: 23px;
    flex: none;
    display: flex;
    align-items: center;
    padding-left: 24px;
    background: linear-gradient(#4a4a4a, #3f3f3f);
    color: #c4c4c4;
    font-size: 12px;
}
.ready {
    width: 56px;
    color: #b8b8b8;
}
.a11y { margin-left: 17px; }
.a11y-text {
    margin-left: 3px;
}
.status-right {
    margin-left: auto;
    height: 100%;
    display: flex;
    align-items: center;
}
.view {
    height: 100%;
    display: flex;
    align-items: center;
    justify-content: center;
}
.view-on {
    width: 37px;
    background-color: #5a5a5a;
}
.view-page { width: 34px; }
.view-break { width: 38px; }
.zoom-btn {
    width: 8px;
    height: 2px;
    margin-left: 7px;
    background-color: #e4e4e4;
    position: relative;
}
.zoom-plus {
    margin-left: 7px;
}
.zoom-plus::after {
    content: "";
    position: absolute;
    left: 3px;
    top: -3px;
    width: 2px;
    height: 8px;
    background-color: #e4e4e4;
}
.slider {
    width: 100px;
    height: 4px;
    margin-left: 7px;
    border-radius: 2px;
    background-color: #7c7c7c;
    display: flex;
    align-items: center;
    justify-content: center;
}
.slider-knob {
    width: 16px;
    height: 16px;
    flex: none;
    border-radius: 50%;
    background-color: #a8a8a8;
}
.zoom-val {
    width: 73px;
    padding-left: 17px;
    color: #c0c0c0;
    font-size: 12px;
}
```
